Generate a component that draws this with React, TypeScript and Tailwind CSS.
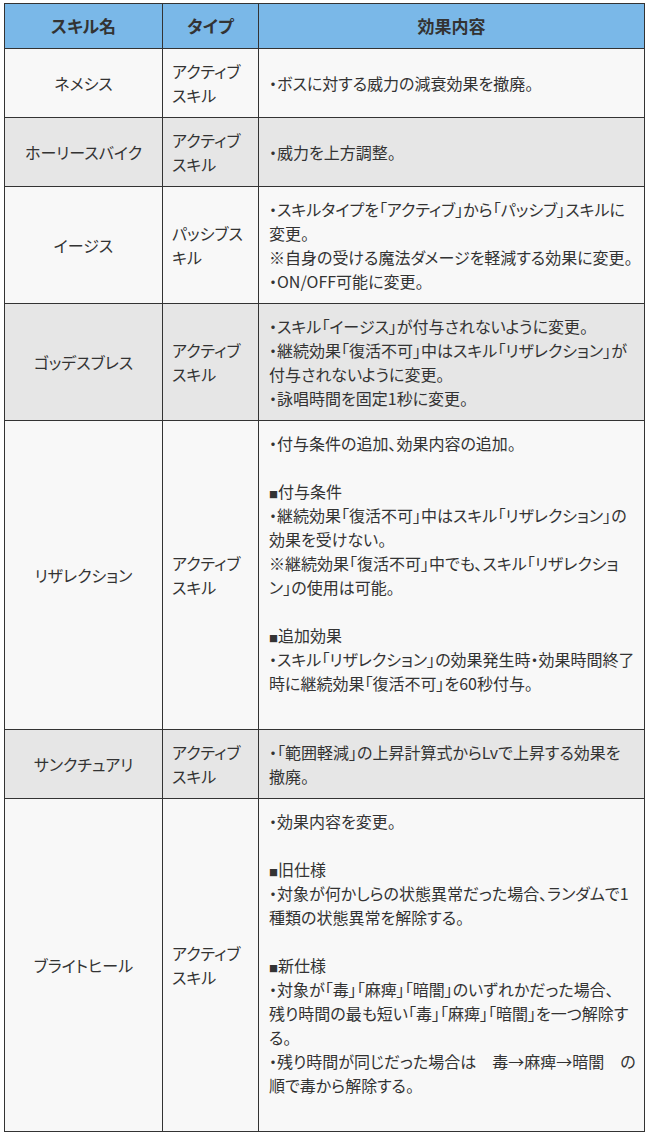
import React from 'react';

// スキル調整一覧テーブル

type Row = {
  name: string;
  type: string[];
  effect: string[];
  shaded?: boolean;
};

const rows: Row[] = [
  {
    name: 'ネメシス',
    type: ['アクティブ', 'スキル'],
    effect: ['・ボスに対する威力の減衰効果を撤廃。'],
  },
  {
    name: 'ホーリースバイク',
    type: ['アクティブ', 'スキル'],
    effect: ['・威力を上方調整。'],
    shaded: true,
  },
  {
    name: 'イージス',
    type: ['パッシブス', 'キル'],
    effect: [
      '・スキルタイプを「アクティブ」から「パッシブ」スキルに',
      '変更。',
      '※自身の受ける魔法ダメージを軽減する効果に変更。',
      '・ON/OFF可能に変更。',
    ],
  },
  {
    name: 'ゴッデスブレス',
    type: ['アクティブ', 'スキル'],
    effect: [
      '・スキル「イージス」が付与されないように変更。',
      '・継続効果「復活不可」中はスキル「リザレクション」が',
      '付与されないように変更。',
      '・詠唱時間を固定1秒に変更。',
    ],
    shaded: true,
  },
  {
    name: 'リザレクション',
    type: ['アクティブ', 'スキル'],
    effect: [
      '・付与条件の追加、効果内容の追加。',
      '',
      '■付与条件',
      '・継続効果「復活不可」中はスキル「リザレクション」の',
      '効果を受けない。',
      '※継続効果「復活不可」中でも、スキル「リザレクショ',
      'ン」の使用は可能。',
      '',
      '■追加効果',
      '・スキル「リザレクション」の効果発生時・効果時間終了',
      '時に継続効果「復活不可」を60秒付与。',
      '',
    ],
  },
  {
    name: 'サンクチュアリ',
    type: ['アクティブ', 'スキル'],
    effect: ['・「範囲軽減」の上昇計算式からLvで上昇する効果を', '撤廃。'],
    shaded: true,
  },
  {
    name: 'ブライトヒール',
    type: ['アクティブ', 'スキル'],
    effect: [
      '・効果内容を変更。',
      '',
      '■旧仕様',
      '・対象が何かしらの状態異常だった場合、ランダムで1',
      '種類の状態異常を解除する。',
      '',
      '■新仕様',
      '・対象が「毒」「麻痺」「暗闇」のいずれかだった場合、',
      '残り時間の最も短い「毒」「麻痺」「暗闇」を一つ解除す',
      'る。',
      '・残り時間が同じだった場合は　毒→麻痺→暗闇　の',
      '順で毒から解除する。',
      '',
    ],
  },
];

function Lines({ lines }: { lines: string[] }) {
  return (
    <>
      {lines.map((l, i) => (
        <div key={i} className="h-6 whitespace-nowrap">
          {l.startsWith('■') ? (
            <>
              <span className="text-[9px]">■</span>
              {l.slice(1)}
            </>
          ) : (
            l
          )}
        </div>
      ))}
    </>
  );
}

export default function App() {
  return (
    <div
      className="min-h-screen bg-white pt-[3px] pl-1 text-[#333] text-[16px] leading-6 [font-feature-settings:'palt']"
      style={{ fontFamily: '"Noto Sans CJK JP", "Noto Sans", sans-serif' }}
    >
      <table className="w-[640px] table-fixed border-collapse border border-[#333]">
        <colgroup>
          <col className="w-[158px]" />
          <col className="w-[96px]" />
          <col className="w-[386px]" />
        </colgroup>
        <thead>
          <tr className="bg-[#7ab8e8] text-[17px] font-bold">
            <th className="border border-[#333] py-[10px] text-center">スキル名</th>
            <th className="border border-[#333] py-[10px] text-center">タイプ</th>
            <th className="border border-[#333] py-[10px] text-center">効果内容</th>
          </tr>
        </thead>
        <tbody>
          {rows.map((r) => (
            <tr key={r.name} className={r.shaded ? 'bg-[#e6e6e6]' : 'bg-[#f8f8f8]'}>
              <td className="border border-[#333] px-2 py-[10px] text-center align-middle whitespace-nowrap">
                {r.name}
              </td>
              <td className="border border-[#333] px-[9px] py-[10px] align-middle">
                <Lines lines={r.type} />
              </td>
              <td className="border border-[#333] px-[10px] py-[10px] align-middle">
                <Lines lines={r.effect} />
              </td>
            </tr>
          ))}
        </tbody>
      </table>
    </div>
  );
}
